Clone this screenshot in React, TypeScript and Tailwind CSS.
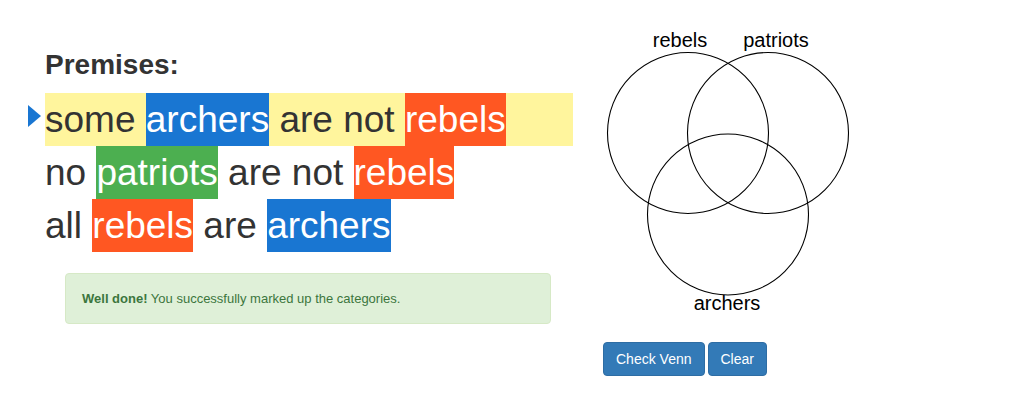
const premises = [
  [
    { t: "some " },
    { t: "archers", c: "bg-[#1976d2] text-white" },
    { t: " are not " },
    { t: "rebels", c: "bg-[#ff5722] text-white" },
  ],
  [
    { t: "no " },
    { t: "patriots", c: "bg-[#4caf50] text-white" },
    { t: " are not " },
    { t: "rebels", c: "bg-[#ff5722] text-white" },
  ],
  [
    { t: "all " },
    { t: "rebels", c: "bg-[#ff5722] text-white" },
    { t: " are " },
    { t: "archers", c: "bg-[#1976d2] text-white" },
  ],
];

function Venn() {
  return (
    <svg width="260" height="300" className="block" style={{ fontFamily: '"Liberation Sans", Arial, sans-serif' }}>
      <circle cx="85" cy="113" r="80.5" fill="none" stroke="#000" strokeWidth="1.1" />
      <circle cx="165" cy="113" r="80.5" fill="none" stroke="#000" strokeWidth="1.1" />
      <circle cx="125" cy="194.5" r="80.5" fill="none" stroke="#000" strokeWidth="1.1" />
      <text x="77" y="27" textAnchor="middle" fontSize="20" fill="#000">rebels</text>
      <text x="173" y="27" textAnchor="middle" fontSize="20" fill="#000">patriots</text>
      <text x="124" y="290" textAnchor="middle" fontSize="20" fill="#000">archers</text>
    </svg>
  );
}

export default function App() {
  return (
    <div className="flex h-[404px] w-[1031px] bg-white text-[#333] font-['Liberation_Sans',Arial,sans-serif]">
      <div className="w-[603px] shrink-0 pl-[45px] pt-[50px]">
        <h3 className="text-[28px] font-bold leading-[1.1]">Premises:</h3>
        <div className="mt-[12px] flex flex-col">
          {premises.map((words, i) => (
            <div
              key={i}
              className={`relative w-[528px] whitespace-pre text-[37px] leading-[53px] ${i === 0 ? "bg-[#fff59d]" : ""}`}
            >
              {i === 0 && (
                <span className="absolute left-[-17px] top-[12px] h-0 w-0 border-y-[11.5px] border-l-[13px] border-y-transparent border-l-[#1976d2]" />
              )}
              {words.map((w, j) => (
                <span key={j} className={`inline-block ${w.c ?? ""}`}>
                  {w.t}
                </span>
              ))}
            </div>
          ))}
        </div>
        <div className="ml-[20px] mt-[21px] w-[486px] rounded-[4px] border border-[#d6e9c6] bg-[#dff0d8] px-[16px] py-[15px] text-[13px] leading-[19px] text-[#3c763d]">
          <strong>Well done!</strong> You successfully marked up the categories.
        </div>
      </div>
      <div className="pt-[20px]">
        <Venn />
        <div className="mt-[22px] flex gap-[3px]">
          <button className="rounded-[4px] border border-[#2e6da4] bg-[#337ab7] px-[12px] py-[6px] text-[14px] leading-[20px] text-white">
            Check Venn
          </button>
          <button className="rounded-[4px] border border-[#2e6da4] bg-[#337ab7] px-[12px] py-[6px] text-[14px] leading-[20px] text-white">
            Clear
          </button>
        </div>
      </div>
    </div>
  );
}
